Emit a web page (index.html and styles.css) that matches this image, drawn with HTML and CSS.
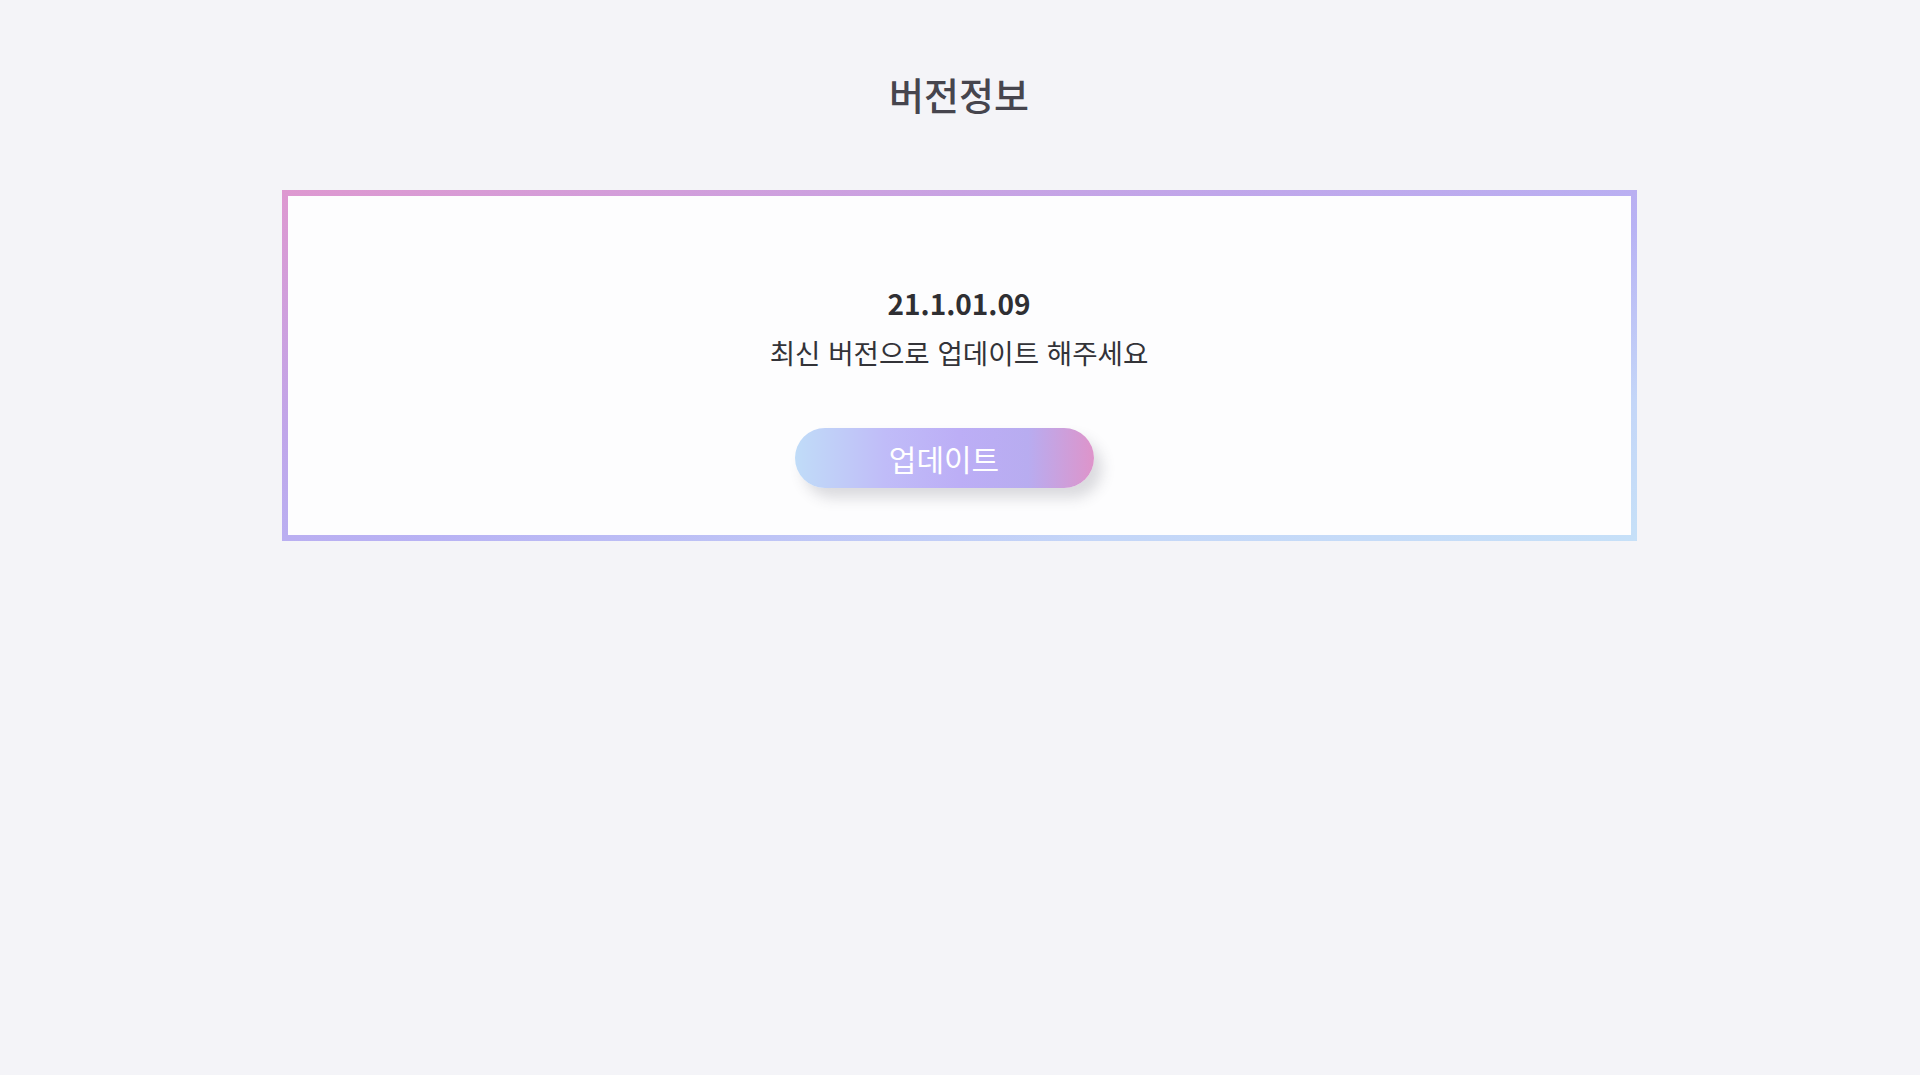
FILE: index.html
```html
<!DOCTYPE html>
<html lang="ko">
<head>
<meta charset="utf-8">
<title>버전정보</title>
<link rel="stylesheet" href="styles.css">
</head>
<body>
<main class="page">
  <h1 class="title">버전정보</h1>
  <section class="card">
    <div class="version">21.1.01.09</div>
    <div class="message">최신 버전으로 업데이트 해주세요</div>
    <button class="update-btn" type="button">업데이트</button>
  </section>
</main>
</body>
</html>
```
FILE: styles.css
```css
html, body {
  margin: 0;
  padding: 0;
  background: #f4f4f8;
  font-family: "Noto Sans CJK KR", "Noto Sans", sans-serif;
}
.page {
  display: flex;
  flex-direction: column;
  align-items: center;
  padding-top: 69px;
  min-height: 1002px;
}
.title {
  margin: 0;
  font-size: 38px;
  line-height: 50px;
  font-weight: 500;
  color: #46454e;
  margin-right: 2px;
}
.card {
  margin-top: 71px;
  margin-right: 2px;
  width: 1355px;
  box-sizing: border-box;
  border: 6px solid transparent;
  background:
    linear-gradient(#fdfdfe, #fdfdfe) padding-box,
    linear-gradient(to bottom right, #de98d0 0%, #c0a6ea 35%, #b8b2f4 55%, #c4d6f8 80%, #c6e0f8 100%) border-box;
  display: flex;
  flex-direction: column;
  align-items: center;
  padding: 87px 0 47px;
}
.version {
  font-size: 28px;
  line-height: 40px;
  font-weight: 700;
  color: #2f2f33;
}
.message {
  margin-top: 9px;
  font-size: 27.6px;
  line-height: 40px;
  font-weight: 400;
  color: #333338;
}
.update-btn {
  margin-top: 56px;
  margin-right: 30px;
  width: 299px;
  height: 60px;
  border: none;
  border-radius: 30px;
  background: linear-gradient(to right, #c0dcf8 0%, #c0bcf8 30%, #bcaef6 55%, #b8acf0 78%, #de94ca 100%);
  color: #ffffff;
  font-family: "Noto Sans CJK KR", "Noto Sans", sans-serif;
  font-size: 30px;
  line-height: 60px;
  padding: 0;
  box-shadow: 8px 10px 14px rgba(60, 60, 80, 0.18);
  cursor: pointer;
}
```
